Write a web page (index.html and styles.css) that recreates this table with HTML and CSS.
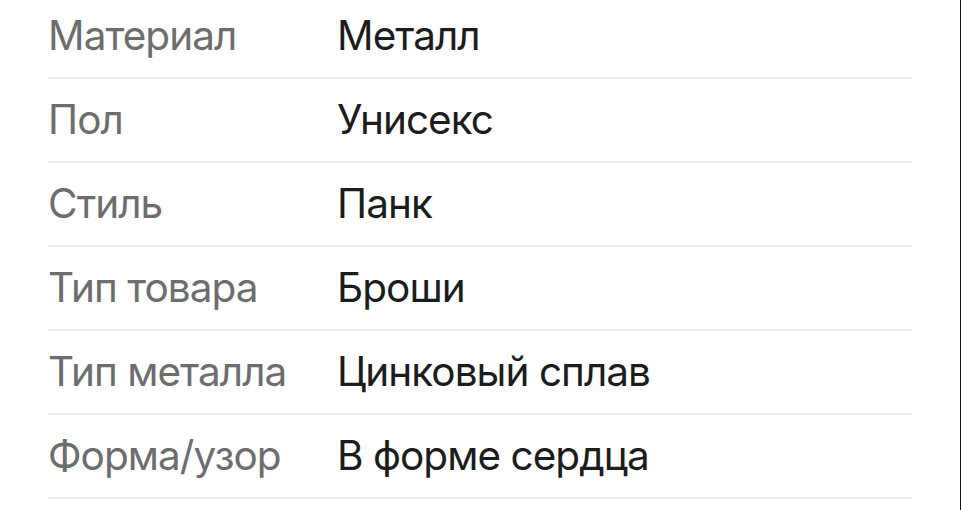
FILE: index.html
```html
<!DOCTYPE html>
<html lang="ru">
<head>
<meta charset="utf-8">
<link rel="stylesheet" href="styles.css">
</head>
<body>
<div class="page">
  <dl class="specs">
    <div class="row"><dt>Материал</dt><dd>Металл</dd></div>
    <div class="row"><dt>Пол</dt><dd>Унисекс</dd></div>
    <div class="row"><dt>Стиль</dt><dd>Панк</dd></div>
    <div class="row"><dt>Тип товара</dt><dd>Броши</dd></div>
    <div class="row"><dt>Тип металла</dt><dd>Цинковый сплав</dd></div>
    <div class="row"><dt>Форма/узор</dt><dd>В форме сердца</dd></div>
  </dl>
</div>
</body>
</html>
```
FILE: styles.css
```css
html, body {
  margin: 0;
  padding: 0;
  background: #fff;
}
.page {
  width: 960px;
  height: 510px;
  border-right: 1px solid #111;
  overflow: hidden;
  font-family: Inter, "Noto Sans", sans-serif;
}
.specs {
  margin: -5px 48px 0 48px;
  padding: 0;
}
.row {
  display: grid;
  grid-template-columns: 289px 1fr;
  align-items: center;
  height: 82px;
  border-bottom: 2px solid #eeeeee;
}
dt, dd {
  margin: 0;
  font-size: 40.5px;
  letter-spacing: -0.95px;
  line-height: 1;
  white-space: nowrap;
}
dt {
  color: #6d6d6d;
}
dd {
  color: #1c1c1c;
}
```
